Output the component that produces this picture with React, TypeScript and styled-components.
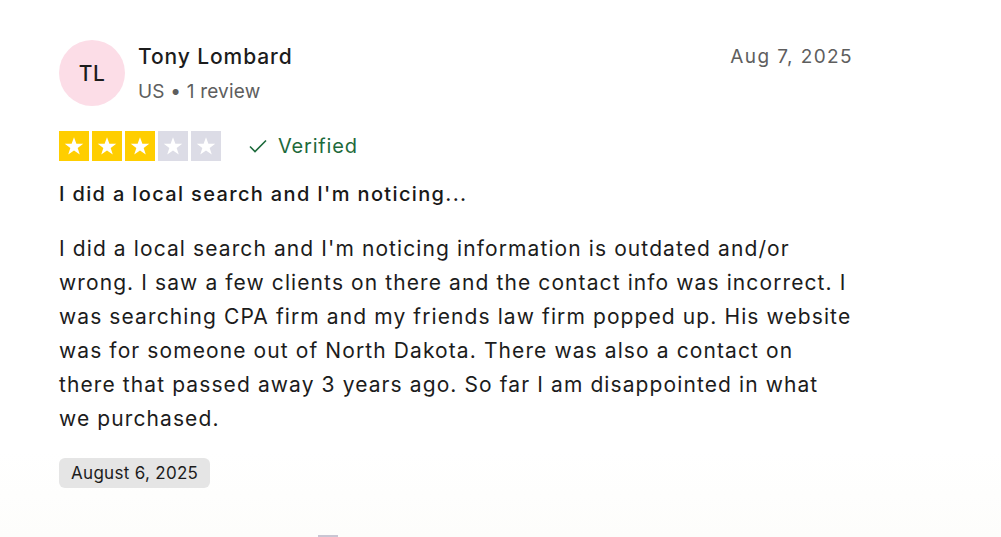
import React from "react";
import styled, { createGlobalStyle } from "styled-components";

const GlobalStyle = createGlobalStyle`
  html, body {
    margin: 0;
    padding: 0;
    background: #ffffff;
  }
  body {
    font-family: Inter, "Noto Sans", sans-serif;
    color: #191919;
  }
`;

const Page = styled.div`
  min-height: 537px;
  background: linear-gradient(#ffffff 0%, #ffffff 84%, #fdfdfb 100%);
  padding: 40px 0 0 59px;
  box-sizing: border-box;
  overflow: hidden;
  position: relative;
`;

const Card = styled.article`
  width: 794px;
  display: flex;
  flex-direction: column;
`;

const Header = styled.div`
  display: flex;
  align-items: flex-start;
  justify-content: space-between;
`;

const Author = styled.div`
  display: flex;
  align-items: center;
  gap: 13px;
`;

const Avatar = styled.div`
  width: 66px;
  height: 66px;
  border-radius: 50%;
  background: #fcdde7;
  display: flex;
  align-items: center;
  justify-content: center;
  font-size: 21px;
  font-weight: 500;
  letter-spacing: 0.5px;
  color: #1c1c1c;
`;

const AuthorInfo = styled.div`
  display: flex;
  flex-direction: column;
  gap: 11px;
`;

const Name = styled.span`
  font-size: 21px;
  font-weight: 500;
  letter-spacing: 0.9px;
  color: #1c1c1c;
`;

const Meta = styled.span`
  font-size: 19px;
  letter-spacing: 0.2px;
  color: #5e5e5e;
`;

const PostedDate = styled.span`
  font-size: 19px;
  letter-spacing: 1.4px;
  color: #5e5e5e;
  margin-top: 5px;
`;

const RatingRow = styled.div`
  display: flex;
  align-items: center;
  gap: 27px;
  margin-top: 25px;
`;

const Stars = styled.div`
  display: flex;
  gap: 3px;
`;

const StarBox = styled.span<{ $filled: boolean }>`
  width: 30px;
  height: 30px;
  background: ${(p) => (p.$filled ? "#ffce00" : "#dcdce6")};
  display: flex;
  align-items: center;
  justify-content: center;
`;

const Verified = styled.span`
  display: flex;
  align-items: center;
  gap: 10px;
  color: #1d6a3b;
  font-size: 20px;
  letter-spacing: 0.8px;
`;

const Title = styled.h2`
  margin: 21px 0 0;
  font-size: 20px;
  font-weight: 500;
  letter-spacing: 1.35px;
  color: #191919;
`;

const Body = styled.p`
  margin: 26px 0 0;
  font-size: 21px;
  line-height: 34px;
  letter-spacing: 1.1px;
  color: #1c1c1c;
`;

const DatePill = styled.span`
  align-self: flex-start;
  margin-top: 22px;
  background: #e5e5e5;
  border-radius: 6px;
  padding: 4px 12px;
  font-size: 17px;
  line-height: 22px;
  letter-spacing: 0.3px;
  color: #1c1c1c;
`;

const Peek = styled.div`
  position: absolute;
  left: 318px;
  top: 535px;
  width: 20px;
  height: 4px;
  background: #c9c6d3;
`;

function Star() {
  return (
    <svg width="22" height="22" viewBox="0 0 24 24">
      <path
        fill="#ffffff"
        d="M12 2.5l2.6 7.1h7.5l-6.1 4.5 2.3 7.3L12 16.9l-6.3 4.5 2.3-7.3-6.1-4.5h7.5z"
      />
    </svg>
  );
}

export default function App() {
  const rating = 3;
  return (
    <Page>
      <GlobalStyle />
      <Card>
        <Header>
          <Author>
            <Avatar>TL</Avatar>
            <AuthorInfo>
              <Name>Tony Lombard</Name>
              <Meta>US • 1 review</Meta>
            </AuthorInfo>
          </Author>
          <PostedDate>Aug 7, 2025</PostedDate>
        </Header>
        <RatingRow>
          <Stars>
            {[1, 2, 3, 4, 5].map((i) => (
              <StarBox key={i} $filled={i <= rating}>
                <Star />
              </StarBox>
            ))}
          </Stars>
          <Verified>
            <svg width="20" height="20" viewBox="0 0 20 20" fill="none">
              <path d="M2 10.5l5 5 11-11" stroke="#1d6a3b" strokeWidth="1.6" />
            </svg>
            Verified
          </Verified>
        </RatingRow>
        <Title>I did a local search and I'm noticing...</Title>
        <Body>
          I did a local search and I'm noticing information is outdated and/or
          wrong. I saw a few clients on there and the contact info was
          incorrect. I was searching CPA firm and my friends law firm popped
          up. His website was for someone out of North Dakota. There was also a
          contact on there that passed away 3 years ago. So far I am
          disappointed in what we purchased.
        </Body>
        <DatePill>August 6, 2025</DatePill>
      </Card>
      <Peek />
    </Page>
  );
}
